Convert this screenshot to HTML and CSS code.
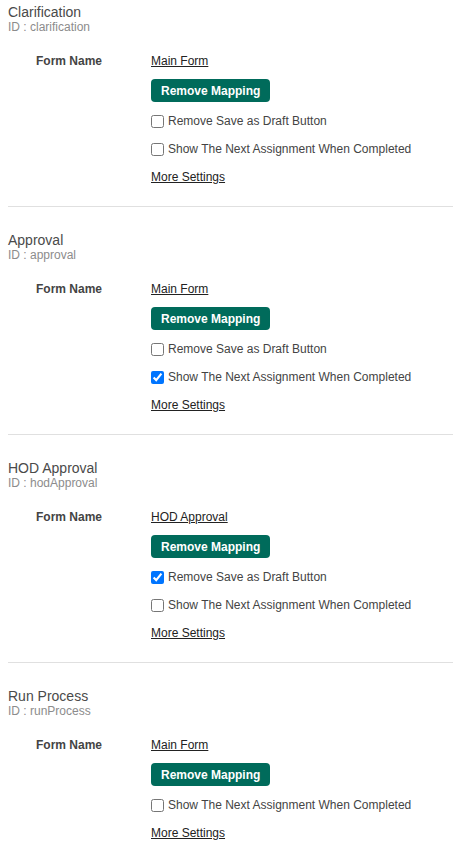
FILE: index.html
```html
<!DOCTYPE html>
<html lang="en">
  <head>
    <meta charset="UTF-8" />
    <meta name="viewport" content="width=device-width, initial-scale=1.0" />
    <title>Form Mapping</title>
    <link rel="stylesheet" href="styles.css">
  </head>
  <body>
    <!-- Clarification -->
    <section class="task">
      <div class="task-name">Clarification</div>
      <div class="task-id">ID : clarification</div>
      <div class="field">
        <div class="field-label">Form Name</div>
        <div class="field-value">
          <div class="row"><a href="#">Main Form</a></div>
          <button class="btn-remove">Remove Mapping</button>
          <label class="row check"><input type="checkbox" /> Remove Save as Draft Button</label>
          <label class="row check"><input type="checkbox" /> Show The Next Assignment When Completed</label>
          <div class="row"><a href="#">More Settings</a></div>
        </div>
      </div>
    </section>

    <!-- Approval -->
    <section class="task">
      <div class="task-name">Approval</div>
      <div class="task-id">ID : approval</div>
      <div class="field">
        <div class="field-label">Form Name</div>
        <div class="field-value">
          <div class="row"><a href="#">Main Form</a></div>
          <button class="btn-remove">Remove Mapping</button>
          <label class="row check"><input type="checkbox" /> Remove Save as Draft Button</label>
          <label class="row check"><input type="checkbox" checked /> Show The Next Assignment When Completed</label>
          <div class="row"><a href="#">More Settings</a></div>
        </div>
      </div>
    </section>

    <!-- HOD Approval -->
    <section class="task">
      <div class="task-name">HOD Approval</div>
      <div class="task-id">ID : hodApproval</div>
      <div class="field">
        <div class="field-label">Form Name</div>
        <div class="field-value">
          <div class="row"><a href="#">HOD Approval</a></div>
          <button class="btn-remove">Remove Mapping</button>
          <label class="row check"><input type="checkbox" checked /> Remove Save as Draft Button</label>
          <label class="row check"><input type="checkbox" /> Show The Next Assignment When Completed</label>
          <div class="row"><a href="#">More Settings</a></div>
        </div>
      </div>
    </section>

    <!-- Run Process -->
    <section class="task">
      <div class="task-name">Run Process</div>
      <div class="task-id">ID : runProcess</div>
      <div class="field">
        <div class="field-label">Form Name</div>
        <div class="field-value">
          <div class="row"><a href="#">Main Form</a></div>
          <button class="btn-remove">Remove Mapping</button>
          <label class="row check"><input type="checkbox" /> Show The Next Assignment When Completed</label>
          <div class="row"><a href="#">More Settings</a></div>
        </div>
      </div>
    </section>
  </body>
</html>
```

FILE: styles.css
```css
body {
  font-family: "Liberation Sans", Arial, sans-serif;
  margin: 0;
  padding: 4px 0 0 8px;
  background-color: #fff;
  color: #444;
}

.task {
  padding-bottom: 19px;
  border-bottom: 1px solid #e0e0e0;
  margin-bottom: 25px;
}

.task-name {
  font-size: 14px;
  line-height: 16px;
  color: #4a4a4a;
}

.task-id {
  font-size: 12px;
  line-height: 14px;
  color: #8c8c8c;
}

.field {
  display: grid;
  grid-template-columns: 115px 1fr;
  padding-left: 28px;
  margin-top: 17px;
  font-size: 12px;
}

.field-label {
  font-weight: bold;
  line-height: 20px;
  color: #444;
}

.row {
  line-height: 20px;
  margin-bottom: 8px;
}

.row:last-child {
  margin-bottom: 0;
}

.row a {
  color: #222;
  text-decoration: underline;
}

.btn-remove {
  display: block;
  height: 23px;
  padding: 0 10px;
  margin-bottom: 9px;
  background-color: #006b5b;
  color: #fff;
  font-family: "Liberation Sans", Arial, sans-serif;
  font-size: 12px;
  font-weight: bold;
  border: none;
  border-radius: 4px;
  cursor: pointer;
}

.check {
  display: flex;
  align-items: center;
  color: #444;
}

.check input {
  width: 13px;
  height: 13px;
  margin: 0 4px 0 0;
}
```
